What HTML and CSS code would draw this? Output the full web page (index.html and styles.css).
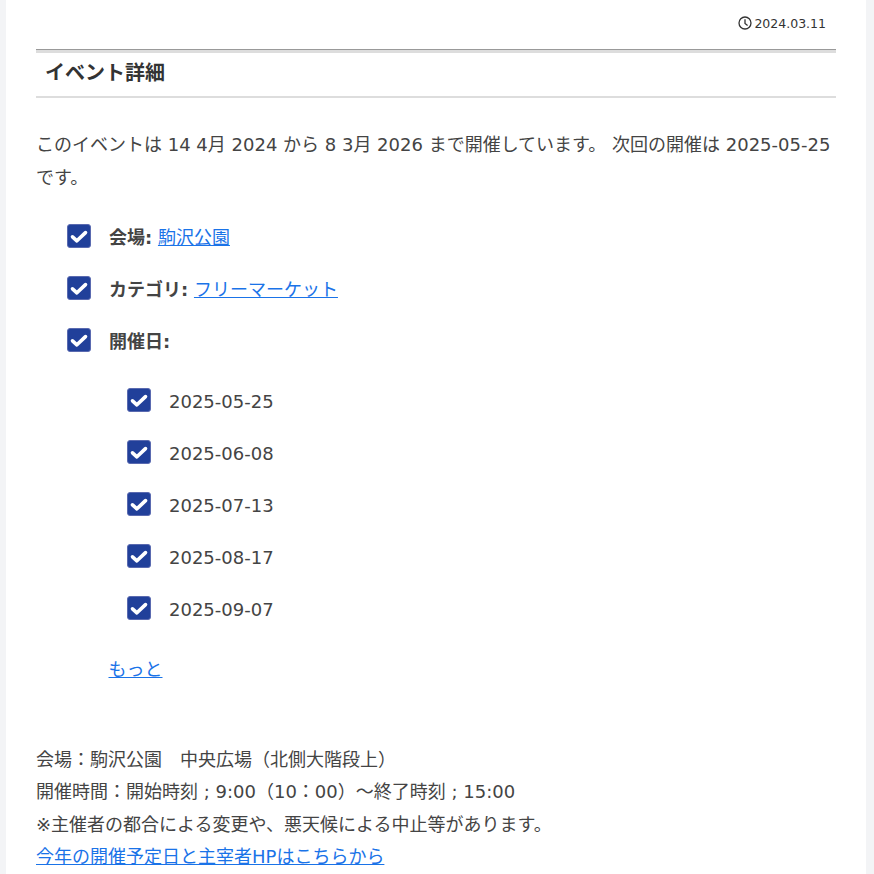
FILE: index.html
```html
<!DOCTYPE html>
<html lang="ja">
<head>
<meta charset="utf-8">
<title>イベント詳細</title>
<link rel="stylesheet" href="styles.css">
</head>
<body>
<main class="page">
  <div class="meta">
    <svg class="clock" viewBox="0 0 14 14" aria-hidden="true"><circle cx="7" cy="7" r="6"/><path d="M7 3.2V7.4L9.6 9.4"/></svg>
    <span>2024.03.11</span>
  </div>
  <h2 class="title">イベント詳細</h2>
  <p class="intro">このイベントは 14 4月 2024 から 8 3月 2026 まで開催しています。 次回の開催は 2025-05-25 です。</p>
  <ul class="checks">
    <li><svg class="tick" viewBox="0 0 24 24"><rect x="0.5" y="0.5" width="23" height="23" rx="2.5"/><path d="M5.5 12.8L9.9 16.8L18.5 8.6"/></svg><span class="label"><b>会場:</b> <a href="#">駒沢公園</a></span></li>
    <li><svg class="tick" viewBox="0 0 24 24"><rect x="0.5" y="0.5" width="23" height="23" rx="2.5"/><path d="M5.5 12.8L9.9 16.8L18.5 8.6"/></svg><span class="label"><b>カテゴリ:</b> <a href="#">フリーマーケット</a></span></li>
    <li><svg class="tick" viewBox="0 0 24 24"><rect x="0.5" y="0.5" width="23" height="23" rx="2.5"/><path d="M5.5 12.8L9.9 16.8L18.5 8.6"/></svg><span class="label"><b>開催日:</b></span></li>
  </ul>
  <ul class="checks dates">
    <li><svg class="tick" viewBox="0 0 24 24"><rect x="0.5" y="0.5" width="23" height="23" rx="2.5"/><path d="M5.5 12.8L9.9 16.8L18.5 8.6"/></svg><span>2025-05-25</span></li>
    <li><svg class="tick" viewBox="0 0 24 24"><rect x="0.5" y="0.5" width="23" height="23" rx="2.5"/><path d="M5.5 12.8L9.9 16.8L18.5 8.6"/></svg><span>2025-06-08</span></li>
    <li><svg class="tick" viewBox="0 0 24 24"><rect x="0.5" y="0.5" width="23" height="23" rx="2.5"/><path d="M5.5 12.8L9.9 16.8L18.5 8.6"/></svg><span>2025-07-13</span></li>
    <li><svg class="tick" viewBox="0 0 24 24"><rect x="0.5" y="0.5" width="23" height="23" rx="2.5"/><path d="M5.5 12.8L9.9 16.8L18.5 8.6"/></svg><span>2025-08-17</span></li>
    <li><svg class="tick" viewBox="0 0 24 24"><rect x="0.5" y="0.5" width="23" height="23" rx="2.5"/><path d="M5.5 12.8L9.9 16.8L18.5 8.6"/></svg><span>2025-09-07</span></li>
  </ul>
  <p class="more"><a href="#">もっと</a></p>
  <p class="notes">会場：駒沢公園　中央広場（北側大階段上）<br>開催時間：開始時刻 ; 9:00（10：00）～終了時刻 ; 15:00<br>※主催者の都合による変更や、悪天候による中止等があります。<br><a href="#">今年の開催予定日と主宰者HPはこちらから</a></p>
</main>
</body>
</html>
```
FILE: styles.css
```css
html, body { margin: 0; padding: 0; height: 874px; overflow: hidden; }
body {
  background: #f3f4f6;
  font-family: "DejaVu Sans", "Noto Sans CJK JP", sans-serif;
  font-size: 18px;
  color: #444;
}
.page {
  width: 800px;
  height: 874px;
  margin-left: 6px;
  padding: 0 30px;
  background: #fff;
  overflow: hidden;
}
.meta {
  box-sizing: border-box;
  height: 49px;
  padding: 0 10px 3px 0;
  display: flex;
  justify-content: flex-end;
  align-items: center;
  gap: 2px;
  font-size: 12.5px;
  color: #333;
}
.clock { width: 14px; height: 14px; fill: none; stroke: #333; stroke-width: 1.3; }
.title {
  margin: 0;
  height: 46px;
  padding-left: 9px;
  border-top: 1px solid #999;
  border-bottom: 2px solid #ddd;
  box-shadow: inset 0 3px 0 #ddd;
  font-size: 20px;
  font-weight: 700;
  line-height: 46px;
  color: #333;
}
.intro { margin: 30px 0 0; line-height: 33px; }
.checks { list-style: none; margin: 17px 0 0; padding: 0 0 0 30.5px; }
.checks li { display: flex; align-items: center; height: 52px; gap: 18.5px; }
.dates { margin-top: 8px; padding-left: 90.5px; }
.tick { flex: none; width: 24px; height: 24px; margin-top: -2px; }
.tick rect { fill: #21409a; stroke: #5a6ab0; stroke-width: 1; }
.tick path { fill: none; stroke: #fff; stroke-width: 3.6; stroke-linecap: round; stroke-linejoin: round; }
.label { margin-top: -2px; }
a { color: #1a73e8; text-decoration: underline; }
.more { margin: 15px 0 0 72.5px; line-height: 40px; }
.notes { margin: 54px 0 0; line-height: 32.4px; }
```
